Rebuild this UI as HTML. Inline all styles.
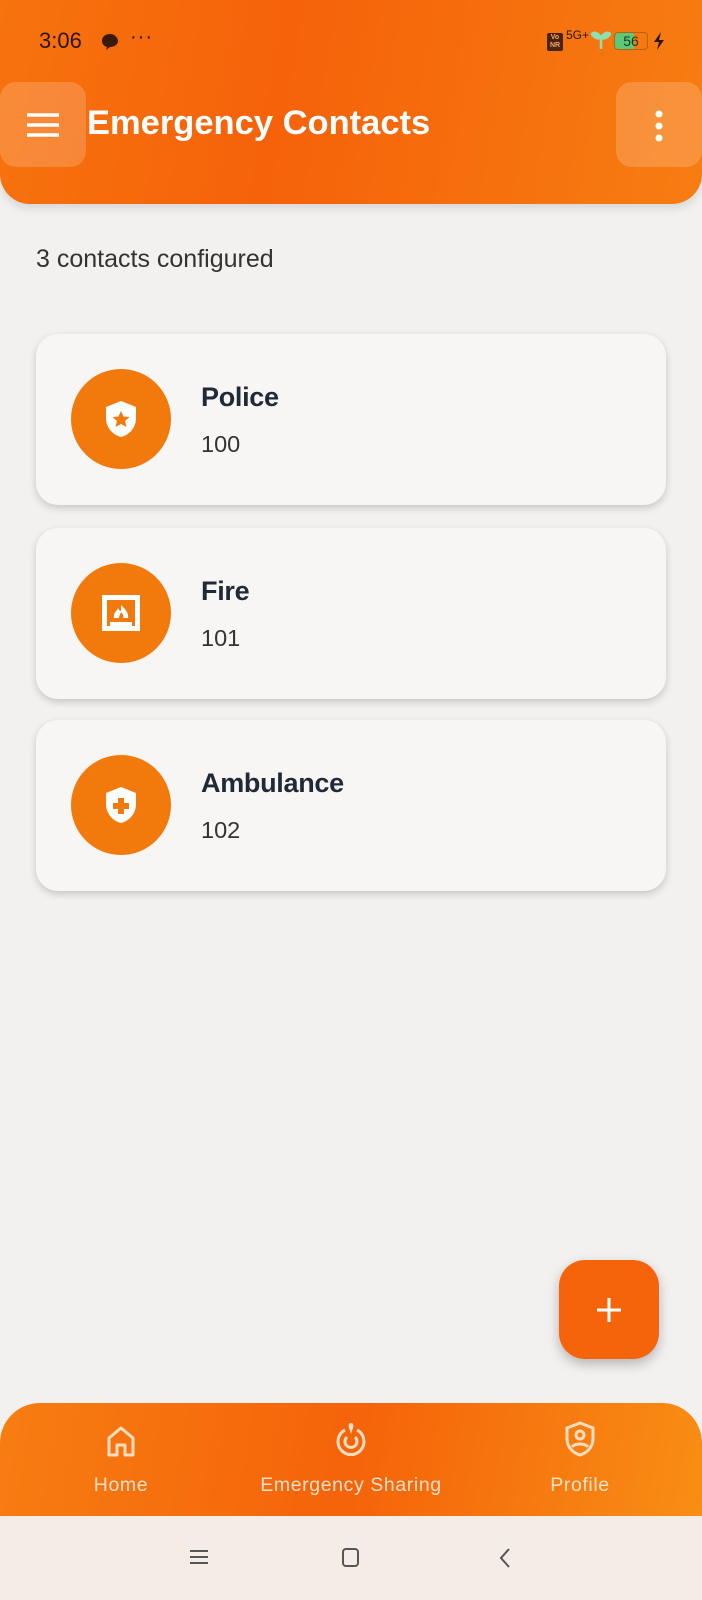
<!DOCTYPE html>
<html><head><meta charset="utf-8"><style>
*{margin:0;padding:0;box-sizing:border-box}
body{width:702px;height:1600px;overflow:hidden;background:#f3f1f0;font-family:"Liberation Sans",sans-serif;position:relative}
.hdr{position:absolute;left:0;top:0;width:702px;height:204px;background:linear-gradient(100deg,#f7730e 0%,#f5620a 40%,#f77d12 100%);border-radius:0 0 30px 30px;box-shadow:0 4px 10px rgba(0,0,0,.12)}
.abs{position:absolute}
.btn{position:absolute;background:rgba(255,255,255,.18);border-radius:16px}
.card{position:absolute;left:36px;width:630px;height:171px;background:#f7f6f5;border-radius:22px;box-shadow:0 3px 8px rgba(0,0,0,.18)}
.circ{position:absolute;left:35px;top:35px;width:100px;height:100px;border-radius:50%;background:#f27a0c;display:flex;align-items:center;justify-content:center}
.nm{position:absolute;left:165px;top:48px;font-size:27px;color:#1f2937;font-weight:bold;letter-spacing:-.3px}
.num{position:absolute;left:165px;top:97px;font-size:23.5px;color:#333}
.nav{position:absolute;left:0;top:1403px;width:702px;height:113px;background:linear-gradient(100deg,#f77d12,#f5630a 50%,#f88e14);border-radius:40px 40px 0 0}
.lbl{position:absolute;top:71px;font-size:19.5px;color:#fde0c8;transform:translateX(-50%);white-space:nowrap;letter-spacing:.6px}
.ic{position:absolute;top:22px;transform:translateX(-50%)}
</style></head><body>
<div class="hdr">
 <div class="abs" style="left:39px;top:28px;font-size:22px;color:#2a1608">3:06</div>
 <svg class="abs" style="left:100px;top:32px" width="20" height="20" viewBox="0 0 20 20"><path d="M10 2C5 2 2 5 2 9c0 3 2 5 5 6l-1 3 4-3c5 0 8-3 8-6s-3-7-8-7z" fill="#3a1a08"/></svg>
 <div class="abs" style="left:130px;top:26px;font-size:20px;color:#2a1608;letter-spacing:1px">···</div>
 <div class="abs" style="left:547px;top:33px;width:16px;height:18px;background:#4a2410;border-radius:2px;color:#f7a56a;font-size:7px;font-weight:bold;line-height:8px;text-align:center;padding-top:1px">Vo<br>NR</div>
 <div class="abs" style="left:566px;top:28px;font-size:12px;color:#2a1608">5G+</div>
 <svg class="abs" style="left:590px;top:28px" width="22" height="22" viewBox="0 0 22 22"><path d="M11 21V10M11 10C8 4 3 4 2 6c2 4 6 5 9 4zM11 10c3-6 8-6 9-4-2 4-6 5-9 4z" stroke="#8ee0b0" stroke-width="2.5" fill="#8ee0b0"/></svg>
 <div class="abs" style="left:614px;top:32px;width:34px;height:18px;border:1px solid #b5650f;border-radius:4px;background:linear-gradient(90deg,#5ec87a 60%,transparent 60%);font-size:14px;color:#1a3a1a;text-align:center;line-height:16px">56</div>
 <svg class="abs" style="left:652px;top:31px" width="14" height="20" viewBox="0 0 14 20"><path d="M9 1L2 11h5l-2 8 7-10H7z" fill="#2a1608"/></svg>
 <div class="btn" style="left:0;top:82px;width:86px;height:85px"></div>
 <svg class="abs" style="left:26px;top:112px" width="34" height="26" viewBox="0 0 34 26"><path d="M1 3h32M1 13h32M1 23h32" stroke="#fff" stroke-width="3.5"/></svg>
 <div class="abs" style="left:87px;top:104px;font-size:34.5px;color:#fff;font-weight:bold">Emergency Contacts</div>
 <div class="btn" style="left:616px;top:82px;width:86px;height:85px"></div>
 <svg class="abs" style="left:651px;top:110px" width="16" height="32" viewBox="0 0 16 32"><circle cx="8" cy="4" r="3.5" fill="#fff"/><circle cx="8" cy="16" r="3.5" fill="#fff"/><circle cx="8" cy="28" r="3.5" fill="#fff"/></svg>
</div>
<div class="abs" style="left:36px;top:245px;font-size:25px;color:#333">3 contacts configured</div>

<div class="card" style="top:334px"><div class="circ"><svg width="36" height="40" viewBox="0 0 36 40"><path d="M18 2L3 8v11c0 10 7 17 15 19 8-2 15-9 15-19V8z" fill="#fff"/><path d="M18 12l2.5 5.5 6 .5-4.5 4 1.5 6L18 25l-5.5 3 1.5-6-4.5-4 6-.5z" fill="#f27a0c"/></svg></div><div class="nm">Police</div><div class="num">100</div></div>
<div class="card" style="top:528px"><div class="circ"><svg width="42" height="40" viewBox="0 0 42 40"><path d="M2 2h38v36H2z" fill="#fff"/><path d="M7 7h28v26h-3v-4H10v4H7z" fill="#f27a0c"/><path d="M21 12c4 4 8 8 7 13H14c-1-5 3-7 4-10 1 2 2 3 3 3z" fill="#fff"/><path d="M21 19c2 2 3 4 2 6h-4c0-2 1-3 2-6z" fill="#f27a0c"/></svg></div><div class="nm">Fire</div><div class="num">101</div></div>
<div class="card" style="top:720px"><div class="circ"><svg width="36" height="40" viewBox="0 0 36 40"><path d="M18 2L3 8v11c0 10 7 17 15 19 8-2 15-9 15-19V8z" fill="#fff"/><path d="M15 13h6v5h5v6h-5v5h-6v-5h-5v-6h5z" fill="#f27a0c"/></svg></div><div class="nm">Ambulance</div><div class="num">102</div></div>

<div class="abs" style="left:559px;top:1260px;width:100px;height:99px;border-radius:26px;background:#f5640a;box-shadow:0 5px 12px rgba(0,0,0,.25)"><svg class="abs" style="left:37px;top:37px" width="26" height="26" viewBox="0 0 26 26"><path d="M13 1v24M1 13h24" stroke="#fff" stroke-width="3"/></svg></div>

<div class="nav">
 <svg class="ic" style="left:121px" width="30" height="32" viewBox="0 0 30 32"><path d="M3 30V13L15 3l12 10v17h-8V20h-8v10z" fill="none" stroke="#fddcc0" stroke-width="3" stroke-linejoin="round"/></svg>
 <svg class="ic" style="left:351px;top:18px" width="36" height="36" viewBox="0 0 36 36"><path d="M12 9a13 13 0 1 0 12 0" fill="none" stroke="#fddcc0" stroke-width="3"/><path d="M14 16a6 6 0 1 0 8 0" fill="none" stroke="#fddcc0" stroke-width="3"/><path d="M18 2c2 0 3 2 2 5l-2 6-2-6c-1-3 0-5 2-5z" fill="#fddcc0"/></svg>
 <svg class="ic" style="left:580px;top:18px" width="32" height="36" viewBox="0 0 32 36"><path d="M16 2L3 7v11c0 8 6 14 13 16 7-2 13-8 13-16V7z" fill="none" stroke="#fddcc0" stroke-width="3"/><circle cx="16" cy="14" r="4" fill="none" stroke="#fddcc0" stroke-width="3"/><path d="M8 26c3-4 13-4 16 0" fill="none" stroke="#fddcc0" stroke-width="3"/></svg>
 <div class="lbl" style="left:121px">Home</div>
 <div class="lbl" style="left:351px">Emergency Sharing</div>
 <div class="lbl" style="left:580px">Profile</div>
</div>
<div class="abs" style="left:0;top:1516px;width:702px;height:84px;background:#f6ece6"></div>
<svg class="abs" style="left:189px;top:1549px" width="20" height="16" viewBox="0 0 20 16"><path d="M1 2h18M1 8h18M1 14h18" stroke="#555" stroke-width="2"/></svg>
<div class="abs" style="left:342px;top:1548px;width:17px;height:19px;border:2px solid #555;border-radius:4px"></div>
<svg class="abs" style="left:498px;top:1547px" width="14" height="22" viewBox="0 0 14 22"><path d="M11 2L3 11l8 9" fill="none" stroke="#555" stroke-width="2"/></svg>
</body></html>
